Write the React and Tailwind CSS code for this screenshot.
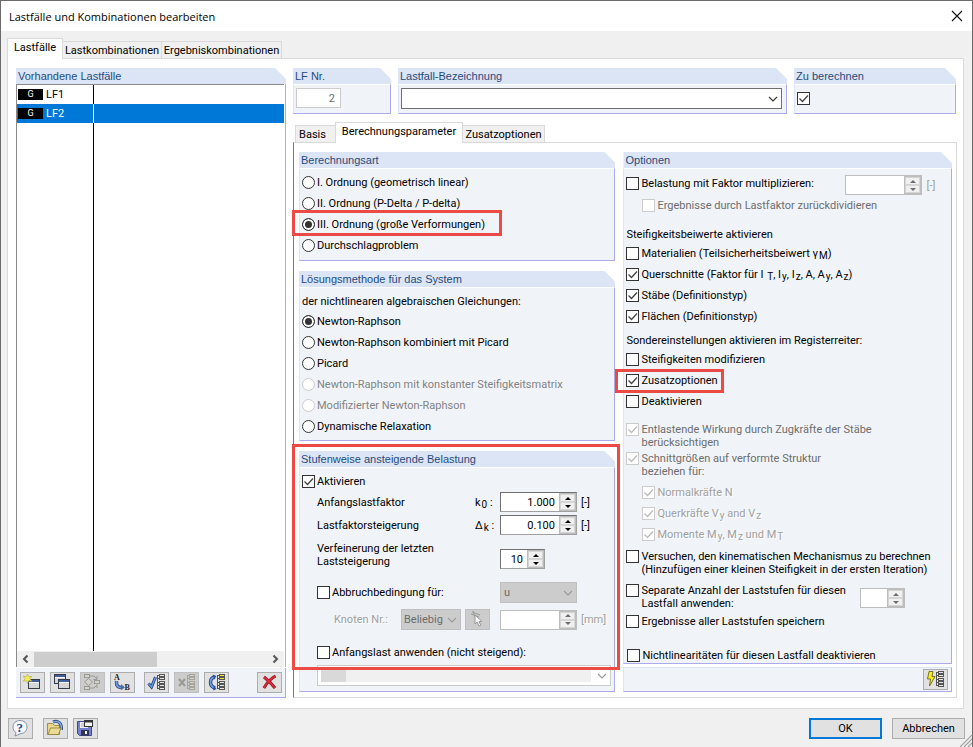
import React from "react";

const Sub = ({ children }) => (
  <span className="relative top-[2px] ml-px text-[10px] leading-none">{children}</span>
);

const Chevron = ({ className = "" }) => (
  <svg
    viewBox="0 0 10 6"
    className={`pointer-events-none absolute top-1/2 right-[4px] h-[6px] w-[10px] -translate-y-1/2 ${className}`}
    fill="none"
    stroke="currentColor"
  >
    <path d="M1 1l4 4 4-4" strokeWidth="1.1" />
  </svg>
);

const GroupTitle = ({ children }) => (
  <h2 className="flex h-4 shrink-0 items-center bg-[#dce5f5] pl-[2px] font-['Liberation_Sans',sans-serif] text-[11px] text-[#1f4b7d] [clip-path:polygon(0_0,calc(100%-11px)_0,100%_11px,100%_100%,0_100%)]">
    {children}
  </h2>
);

const Group = ({ title, className = "", bodyClass = "", children }) => (
  <section className={`flex min-w-0 flex-col ${className}`}>
    <GroupTitle>{title}</GroupTitle>
    <div
      className={`grow border-t border-r border-b border-l border-t-white border-r-[#aaaaec] border-b-[#aaaaec] border-l-[#dce5f5] bg-[#f0f4f9] ${bodyClass}`}
    >
      {children}
    </div>
  </section>
);

const CheckBox = ({ children, checked, disabled, embossed, className = "", ...rest }) => (
  <label
    className={`flex items-start gap-[2px] ${
      embossed
        ? "text-[#a0a0a0] [text-shadow:1px_1px_0_white]"
        : disabled
          ? "text-[#6d6d6d]"
          : "text-black"
    } ${className}`}
  >
    <span className="relative block h-[13px] w-[13px] shrink-0">
      <input
        type="checkbox"
        defaultChecked={checked}
        disabled={disabled}
        className="peer block h-[13px] w-[13px] appearance-none border border-[#333] bg-white disabled:border-[#ccc]"
        {...rest}
      />
      <svg
        viewBox="0 0 13 13"
        className="pointer-events-none absolute inset-0 hidden text-[#444] peer-checked:block peer-disabled:text-[#bbb]"
        fill="none"
        stroke="currentColor"
      >
        <path d="M2.500 6.500l3 3 5.500-6" strokeWidth="1.3" />
      </svg>
    </span>
    <span>{children}</span>
  </label>
);

const Radio = ({ name, children, checked, disabled }) => (
  <label
    className={`flex h-[21px] items-center gap-[2px] ${disabled ? "text-[#838383]" : "text-black"}`}
  >
    <input
      type="radio"
      name={name}
      defaultChecked={checked}
      disabled={disabled}
      className="block h-[13px] w-[13px] shrink-0 appearance-none rounded-full border border-[#333] bg-white checked:bg-[#333] checked:shadow-[inset_0_0_0_2px_white] disabled:border-[#ccc]"
    />
    <span>{children}</span>
  </label>
);

const Spinner = ({ label, value = "", disabled, className = "" }) => (
  <div
    className={`flex h-5 shrink-0 border bg-white ${
      disabled ? "border-[#bdbdbd]" : "border-[#a0a0a0] border-t-[#707070] border-l-[#707070]"
    } ${className}`}
  >
    <input
      type="text"
      aria-label={label}
      defaultValue={value}
      disabled={disabled}
      className="w-0 min-w-0 grow bg-white pr-1 text-right outline-none"
    />
    <div className="flex w-[17px] flex-col bg-[#bdbdbd] p-px">
      {["M0 3l3-3 3 3z", "M0 0l3 3 3-3z"].map((d, i) => (
        <button
          key={d}
          type="button"
          disabled={disabled}
          aria-label={`${label} ${i ? "verringern" : "erhöhen"}`}
          className="flex grow items-center justify-center border border-[#d5d5d5] bg-[#f0f0f0] text-black disabled:text-[#6d6d6d]"
        >
          <svg viewBox="0 0 6 3" className="h-[3px] w-[6px]" fill="currentColor">
            <path d={d} />
          </svg>
        </button>
      ))}
    </div>
  </div>
);

const IconButton = ({ label, disabled, className = "", children }) => (
  <button
    type="button"
    aria-label={label}
    disabled={disabled}
    className={`h-[21px] w-[25px] shrink-0 border border-[#adadad] bg-[#e1e1e1] disabled:border-[#bfbfbf] disabled:bg-[#ccc] ${className}`}
  >
    <svg viewBox="0 0 23 19" className="block h-[19px] w-[23px]" fill="none">
      {children}
    </svg>
  </button>
);

const WindowShape = ({ x, y }) => (
  <g>
    <rect x={x + 0.5} y={y + 0.5} width="11" height="9" fill="#d6d6d6" stroke="#333a48" />
    <rect x={x + 1} y={y + 1} width="10" height="2" fill="#3f5f9f" />
    <path d={`M${x + 1} ${y + 3.5}h10`} stroke="#f4f4f4" />
  </g>
);

const Tree = ({ x = 12, color = "#555", fill = "#e8e8e8", top = fill }) => (
  <g stroke={color}>
    <path d={`M${x + 0.5} 2v14M${x} 2.500h2M${x} 5.500h2M${x} 9.500h2M${x} 12.500h2M${x} 15.500h2`} />
    {[1, 4, 8, 11, 14].map((y, i) => (
      <rect key={y} x={x + 2.5} y={y + 0.5} width="5" height="2" fill={i < 2 ? top : fill} />
    ))}
  </g>
);

const Tab = ({ active, className = "", children }) => (
  <button
    type="button"
    role="tab"
    aria-selected={active}
    className={`border border-b-0 border-[#d9d9d9] whitespace-nowrap ${
      active ? "relative z-10 -mb-px h-[21px] bg-white pb-1" : "h-[17px] bg-[#f0f0f0]"
    } ${className}`}
  >
    {children}
  </button>
);

const Mark = ({ className }) => (
  <span className={`pointer-events-none absolute z-20 border-3 border-[#ec4a44] ${className}`} />
);

const LoadCaseList = () => (
  <section className="flex w-[270px] shrink-0 flex-col">
    <GroupTitle>Vorhandene Lastfälle</GroupTitle>
    <div className="flex grow flex-col border-r border-r-[#aaaaec] pr-px">
      <div className="flex grow flex-col border-t border-l border-[#8a8a8a] bg-white">
        {["LF1", "LF2"].map((name) => (
          <div
            key={name}
            className={`flex h-[19px] items-center ${name === "LF2" ? "bg-[#0078d7] text-white" : ""}`}
          >
            <div
              className={`flex h-full w-[77px] items-center gap-[3px] border-r pl-px ${
                name === "LF2" ? "border-white" : "border-black"
              }`}
            >
              <span className="flex h-[11px] w-[25px] items-center justify-center bg-black text-[9px] text-white">
                G
              </span>
              {name}
            </div>
          </div>
        ))}
        <div className="w-[77px] grow border-r border-black" />
        <div className="flex h-4 items-center bg-[#f0f0f0] text-[#555]">
          <svg viewBox="0 0 17 16" className="h-4 w-[17px]" fill="none" stroke="currentColor" strokeWidth="2">
            <path d="M10.500 4.500L7 8l3.500 3.500" />
          </svg>
          <div className="h-[15px] w-[123px] bg-[#cdcdcd]" />
          <svg viewBox="0 0 17 16" className="ml-auto h-4 w-[17px]" fill="none" stroke="currentColor" strokeWidth="2">
            <path d="M6.500 4.500L10 8l-3.500 3.500" />
          </svg>
        </div>
      </div>
    </div>
    <div className="mt-px flex h-[30px] items-center border-r border-b border-[#aaaaec] bg-[#f0f4f9] pr-[3px] pl-1">
      <div className="flex gap-[5px]">
        <IconButton label="Neuer Lastfall">
          <WindowShape x={7} y={6} />
          <path d="M6.500 1l1.200 2.800 3.100-.6-1.900 2.500 1.900 2.500-3.100-.6-1.200 2.800-1.200-2.800-3.100.6 1.900-2.500-1.900-2.500 3.100.6z" fill="#f7ec5a" stroke="#b0a53c" strokeWidth=".6" />
        </IconButton>
        <IconButton label="Lastfall kopieren">
          <WindowShape x={3} y={1} />
          <WindowShape x={7} y={6} />
        </IconButton>
        <IconButton label="Kombination hinzufügen" disabled>
          <g stroke="#9a9a92" fill="#d4d4cc">
            <rect x="3.500" y="1.500" width="5" height="3" />
            <rect x="3.500" y="13.500" width="5" height="3" />
            <rect x="13.500" y="7.500" width="5" height="3" />
            <path d="M7.500 5.500l4 3.500-4 3.500L3.500 9z" />
            <path d="M9 3h4l3 3M9 15h4l3-3M16 3v3.500h-3.500M16 15v-3.500" fill="none" />
          </g>
        </IconButton>
        <IconButton label="Umnummerieren">
          <text x="3" y="7" fontSize="8" fontWeight="700" fontFamily="Liberation Serif, serif" fill="#222">A</text>
          <path d="M5.500 8c-.5 5 2 7 5.500 6.500" stroke="#263f72" strokeWidth="3.500" />
          <path d="M5.500 8c-.5 5 2 7 5.500 6.500" stroke="#6f98da" strokeWidth="2" />
          <path d="M10 11l4 3.500-4 2.500z" fill="#456ba9" />
          <text x="13.500" y="17" fontSize="8" fontWeight="700" fontFamily="Liberation Serif, serif" fill="#222">B</text>
        </IconButton>
      </div>
      <div className="ml-[9px] flex gap-[5px]">
        <IconButton label="Alle auswählen">
          <path d="M3.500 10.500l3 3.500L10.500 4" stroke="#24437f" strokeWidth="3" />
          <path d="M3.500 10.500l3 3.500L10.500 4" stroke="#6d98e2" strokeWidth="1.300" />
          <Tree />
        </IconButton>
        <IconButton label="Auswahl aufheben" disabled>
          <path d="M4 6l6 7M10 6l-6 7" stroke="#9a9a92" strokeWidth="2" />
          <Tree color="#a4a49c" fill="#d4d4cc" />
        </IconButton>
        <IconButton label="Auswahl umkehren">
          <path d="M10 4C4 5 4 13 10 15" stroke="#24437f" strokeWidth="3.500" />
          <path d="M10 4C4 5 4 13 10 15" stroke="#6d98e2" strokeWidth="1.800" />
          <path d="M7.500 1.500l4 1.500-2.500 3.500zM8 17.500l3.500-1.500-2.500-3.500z" fill="#31549a" />
          <Tree top="#f7ea32" />
        </IconButton>
      </div>
      <IconButton label="Löschen" className="ml-auto">
        <path d="M6 4c4 3 7 6 11 11M17.500 3C12 6 9 9.500 6 15" stroke="#7d1220" strokeWidth="3" />
        <path d="M6 4c4 3 7 6 11 11M17.500 3C12 6 9 9.500 6 15" stroke="#e02b36" strokeWidth="1.800" />
      </IconButton>
    </div>
  </section>
);

const CalculationType = () => (
  <Group title="Berechnungsart" className="h-[109px]" bodyClass="pt-[3px] pl-[2px]">
    <Radio name="type">I. Ordnung (geometrisch linear)</Radio>
    <Radio name="type">II. Ordnung (P-Delta / P-delta)</Radio>
    <div className="relative">
      <Radio name="type" checked>
        III. Ordnung (große Verformungen)
      </Radio>
      <Mark className="-top-[4px] -left-[10px] h-[26px] w-[210px]" />
    </div>
    <Radio name="type">Durchschlagproblem</Radio>
  </Group>
);

const SolverMethod = () => (
  <Group title="Lösungsmethode für das System" className="mt-[10px] h-[170px]" bodyClass="pt-[6px] pl-[2px]">
    <p className="h-[17px] leading-[15px]">der nichtlinearen algebraischen Gleichungen:</p>
    <Radio name="method" checked>Newton-Raphson</Radio>
    <Radio name="method">Newton-Raphson kombiniert mit Picard</Radio>
    <Radio name="method">Picard</Radio>
    <Radio name="method" disabled>Newton-Raphson mit konstanter Steifigkeitsmatrix</Radio>
    <Radio name="method" disabled>Modifizierter Newton-Raphson</Radio>
    <Radio name="method">Dynamische Relaxation</Radio>
  </Group>
);

const IncrementalLoading = () => (
  <div className="relative mt-[10px]">
    <Mark className="-top-[7px] -right-[5px] -left-[7px] h-[226px]" />
    <Group title="Stufenweise ansteigende Belastung" className="h-[241px]" bodyClass="flex flex-col pl-[2px]">
      <CheckBox checked className="mt-[7px]">
        Aktivieren
      </CheckBox>
      <div className="mt-[4px] flex h-5 items-center pl-[15px]">
        <span className="w-[158px]">Anfangslastfaktor</span>
        <span className="w-[25px] whitespace-nowrap">
          k<Sub>0</Sub> :
        </span>
        <Spinner label="Anfangslastfaktor" value="1.000" className="w-[77px]" />
        <span className="ml-1">[-]</span>
      </div>
      <div className="mt-[3px] flex h-5 items-center pl-[15px]">
        <span className="w-[158px]">Lastfaktorsteigerung</span>
        <span className="w-[25px] whitespace-nowrap">
          Δ<Sub>k</Sub> :
        </span>
        <Spinner label="Lastfaktorsteigerung" value="0.100" className="w-[77px]" />
        <span className="ml-1">[-]</span>
      </div>
      <div className="mt-[6px] flex items-center pl-[15px]">
        <span className="w-[183px]">
          Verfeinerung der letzten
          <br />
          Laststeigerung
        </span>
        <Spinner label="Verfeinerung der letzten Laststeigerung" value="10" className="mt-2 w-[45px]" />
      </div>
      <div className="mt-[13px] flex h-[21px] items-center pl-[15px]">
        <CheckBox className="w-[183px]">Abbruchbedingung für:</CheckBox>
        <div className="relative w-[77px]">
          <select
            aria-label="Abbruchbedingung"
            disabled
            className="block h-[21px] w-full appearance-none border border-[#bfbfbf] bg-[#ccc] pl-[3px] text-[#6d6d6d]"
          >
            <option>u</option>
          </select>
          <Chevron className="text-[#999]" />
        </div>
      </div>
      <div className="mt-[6px] flex h-[21px] items-center pl-8 text-[#a0a0a0]">
        <label htmlFor="node" className="w-[67px] [text-shadow:1px_1px_0_white]">
          Knoten Nr.:
        </label>
        <div className="relative w-[60px]">
          <select
            id="node"
            disabled
            className="block h-[21px] w-full appearance-none border border-[#bfbfbf] bg-[#ccc] pl-[2px] text-[#6d6d6d]"
          >
            <option>Beliebig</option>
          </select>
          <Chevron className="text-[#999]" />
        </div>
        <IconButton label="Knoten wählen" disabled className="ml-1">
          <path d="M6 2l8 3M5 4l8 3M7 1l2 6" stroke="#999" />
          <path d="M9 5v9l2.200-2 1.800 4 1.800-.8-1.800-3.700h3z" fill="#fafafa" stroke="#999" />
        </IconButton>
        <Spinner label="Verschiebung" disabled className="ml-[10px] w-[77px]" />
        <span className="ml-1 [text-shadow:1px_1px_0_white]">[mm]</span>
      </div>
      <CheckBox className="mt-[16px] ml-[15px]">Anfangslast anwenden (nicht steigend):</CheckBox>
      <div className="relative mt-[6px] mr-[3px] ml-[15px] h-[21px]">
        <select
          aria-label="Anfangslast"
          disabled
          className="block h-full w-full appearance-none border border-[#ccc] bg-white"
        />
        <span className="pointer-events-none absolute inset-y-[4px] right-[20px] left-[4px] bg-[#f0f0f0]">
          <span className="block h-full w-[25px] bg-[#d9d9d9]" />
        </span>
        <Chevron className="text-[#999]" />
      </div>
    </Group>
  </div>
);

const Options = () => (
  <Group title="Optionen" className="h-[512px]" bodyClass="flex flex-col pt-[6px] pl-[2px]">
    <div className="flex h-[21px]">
      <CheckBox className="mt-[2px] w-[219px] whitespace-nowrap">Belastung mit Faktor multiplizieren:</CheckBox>
      <Spinner label="Faktor" disabled className="w-[77px]" />
      <span className="mt-1 ml-[4px] text-[#a0a0a0]">[-]</span>
    </div>
    <CheckBox disabled className="mt-[3px] ml-4 h-[28px]">
      Ergebnisse durch Lastfaktor zurückdividieren
    </CheckBox>
    <p className="h-[20px] leading-[16px]">Steifigkeitsbeiwerte aktivieren</p>
    <CheckBox className="h-[21px]">
      Materialien (Teilsicherheitsbeiwert γ<Sub>M</Sub>)
    </CheckBox>
    <CheckBox checked className="h-[21px]">
      Querschnitte (Faktor für I <Sub>T</Sub>, I<Sub>y</Sub>, I<Sub>z</Sub>, A, A<Sub>y</Sub>, A
      <Sub>z</Sub>)
    </CheckBox>
    <CheckBox checked className="h-[21px]">
      Stäbe (Definitionstyp)
    </CheckBox>
    <CheckBox checked className="h-[22px]">
      Flächen (Definitionstyp)
    </CheckBox>
    <p className="h-[21px] leading-[17px]">Sondereinstellungen aktivieren im Registerreiter:</p>
    <CheckBox className="h-[21px]">Steifigkeiten modifizieren</CheckBox>
    <div className="relative h-[21px]">
      <CheckBox checked>Zusatzoptionen</CheckBox>
      <Mark className="-top-[5px] -left-[11px] h-[24px] w-[109px]" />
    </div>
    <CheckBox className="h-[28px]">Deaktivieren</CheckBox>
    <CheckBox checked disabled className="h-[29px]">
      Entlastende Wirkung durch Zugkräfte der Stäbe
      <br />
      berücksichtigen
    </CheckBox>
    <CheckBox checked disabled className="h-[34px]">
      Schnittgrößen auf verformte Struktur
      <br />
      beziehen für:
    </CheckBox>
    <CheckBox checked disabled embossed className="ml-4 h-[21px]">
      Normalkräfte N
    </CheckBox>
    <CheckBox checked disabled embossed className="ml-4 h-[21px]">
      Querkräfte V<Sub>y</Sub> and V<Sub>z</Sub>
    </CheckBox>
    <CheckBox checked disabled embossed className="ml-4 h-[22px]">
      Momente M<Sub>y</Sub>, M<Sub>z</Sub> und M<Sub>T</Sub>
    </CheckBox>
    <CheckBox className="h-[34px] whitespace-nowrap">
      Versuchen, den kinematischen Mechanismus zu berechnen
      <br />
      (Hinzufügen einer kleinen Steifigkeit in der ersten Iteration)
    </CheckBox>
    <div className="flex h-[31px]">
      <CheckBox className="w-[234px] whitespace-nowrap">
        Separate Anzahl der Laststufen für diesen
        <br />
        Lastfall anwenden:
      </CheckBox>
      <Spinner label="Anzahl der Laststufen" disabled className="mt-1 w-[45px]" />
    </div>
    <CheckBox className="h-[34px]">Ergebnisse aller Laststufen speichern</CheckBox>
    <CheckBox className="ml-px">Nichtlinearitäten für diesen Lastfall deaktivieren</CheckBox>
  </Group>
);

const App = () => {
  return (
    <main className="flex min-h-screen flex-col border border-[#6b6b6b] bg-[#f0f0f0] font-['Roboto','DejaVu_Sans',sans-serif] text-[11px] leading-[13px] text-black">
      <header className="flex h-[30px] items-center justify-between bg-white pr-[9px] pl-2">
        <h1 className="font-['Open_Sans',sans-serif] text-[11px]">Lastfälle und Kombinationen bearbeiten</h1>
        <button type="button" aria-label="Schließen" className="h-3 w-3">
          <svg viewBox="0 0 12 12" fill="none" stroke="#111" strokeWidth="1.100">
            <path d="M1 1l10 10M11 1L1 11" />
          </svg>
        </button>
      </header>

      <div role="tablist" className="mt-[7px] flex h-5 items-end pl-[6px]">
        <Tab active className="w-[56px]">Lastfälle</Tab>
        <Tab className="-ml-px w-[100px]">Lastkombinationen</Tab>
        <Tab className="-ml-px w-[121px]">Ergebniskombinationen</Tab>
      </div>

      <div className="mr-2 ml-[6px] flex grow gap-[7px] border border-[#d9d9d9] bg-white pt-[9px] pr-[6px] pb-[10px] pl-2">
        <LoadCaseList />

        <section className="flex min-w-0 grow flex-col">
          <div className="flex gap-[7px]">
            <Group title="LF Nr." className="h-[46px] w-[98px]" bodyClass="pt-[3px] pl-[2px]">
              <input
                type="text"
                aria-label="LF Nr."
                defaultValue="2"
                disabled
                className="block h-5 w-[45px] border border-[#ccc] bg-white pr-[5px] text-right text-[#6d6d6d]"
              />
            </Group>
            <Group title="Lastfall-Bezeichnung" className="h-[46px] grow" bodyClass="pt-[3px] pr-1 pl-[2px]">
              <div className="relative">
                <select
                  aria-label="Lastfall-Bezeichnung"
                  className="block h-[21px] w-full appearance-none border border-[#707070] bg-white"
                />
                <Chevron className="text-[#333]" />
              </div>
            </Group>
            <Group title="Zu berechnen" className="mr-px h-[46px] w-[162px]" bodyClass="pt-[7px] pl-[2px]">
              <CheckBox checked aria-label="Zu berechnen" />
            </Group>
          </div>

          <div role="tablist" className="mt-[8px] flex h-5 items-end pl-[2px]">
            <Tab className="w-[41px] pr-[6px]">Basis</Tab>
            <Tab active className="-ml-px w-[128px]">Berechnungsparameter</Tab>
            <Tab className="-ml-px w-[83px]">Zusatzoptionen</Tab>
          </div>

          <div className="grid grow grid-cols-[316fr_328fr] gap-2 border border-[#d9d9d9] border-l-[#7a7a7a] pt-[9px] pr-1 pb-[5px] pl-[5px]">
            <div className="flex min-w-0 flex-col">
              <CalculationType />
              <SolverMethod />
              <IncrementalLoading />
            </div>
            <div className="flex min-w-0 flex-col">
              <Options />
              <div className="mt-[3px] flex h-[25px] items-center justify-end border border-[#dce5f5] border-r-[#aaaaec] border-b-[#aaaaec] bg-[#f0f4f9] pr-[3px]">
                <IconButton label="Berechnungsdetails">
                  <path d="M5 1.500h4l-1 5h3L5.500 16l1-7H3.500z" fill="#f4ec24" stroke="#77761c" />
                  <Tree />
                </IconButton>
              </div>
            </div>
          </div>
        </section>
      </div>

      <footer className="relative flex h-[38px] items-center pr-[7px] pl-[7px]">
        <IconButton label="Hilfe">
          <path d="M11 1.500c4 0 7 2.500 7 6.500s-3 6.500-6 6.500l-6 2.500 1-3.500c-2-1-3-3-3-5.500 0-4 3-6.500 7-6.500z" fill="#f4f6fa" stroke="#8791a5" />
          <text x="7.500" y="13" fontSize="13" fontWeight="700" fontFamily="Liberation Serif, serif" fill="#2b4795">?</text>
        </IconButton>
        <IconButton label="Öffnen" className="ml-[10px]">
          <path d="M3.500 15.500v-11h5l2 2h5v9z" fill="#e9d88a" stroke="#8b7a35" strokeWidth=".8" />
          <path d="M9 3c5-2 9 1 8.500 8" stroke="#2d4b85" strokeWidth="3" />
          <path d="M9 3c5-2 9 1 8.500 8" stroke="#86a9e2" strokeWidth="1.400" />
          <path d="M4 15.500l2.500-6.500h10.500l-2.500 6.500z" fill="#eadb94" stroke="#8b7a35" strokeWidth=".8" />
        </IconButton>
        <IconButton label="Speichern" className="ml-[5px]">
          <path d="M3.500 2.500h14v14h-12l-2-2z" fill="#777fd0" stroke="#3f4690" />
          <rect x="6" y="3" width="8" height="6" fill="#f0f0f6" />
          <path d="M7 5h6M7 7h6" stroke="#aab" />
          <rect x="7" y="11" width="8" height="5.500" fill="#30344e" />
          <rect x="11" y="12" width="2" height="3" fill="#fff" />
          <rect x="10.500" y="1.500" width="8" height="6" fill="#f4f4f4" stroke="#333" />
          <path d="M10.500 2.500h8" stroke="#333" strokeWidth="2" />
        </IconButton>
        <button type="button" className="ml-auto h-[21px] w-[73px] border-2 border-[#0078d7] bg-[#e1e1e1]">
          OK
        </button>
        <button type="button" className="ml-[10px] h-[21px] w-[73px] border border-[#adadad] bg-[#e1e1e1]">
          Abbrechen
        </button>
        <svg viewBox="0 0 12 12" className="absolute right-0 bottom-0 h-3 w-3" stroke="#a0a0a0" strokeWidth="1.200">
          <path d="M0 12L12 0M4 12l8-8M8 12l4-4" />
        </svg>
      </footer>
    </main>
  );
};

export default App;
